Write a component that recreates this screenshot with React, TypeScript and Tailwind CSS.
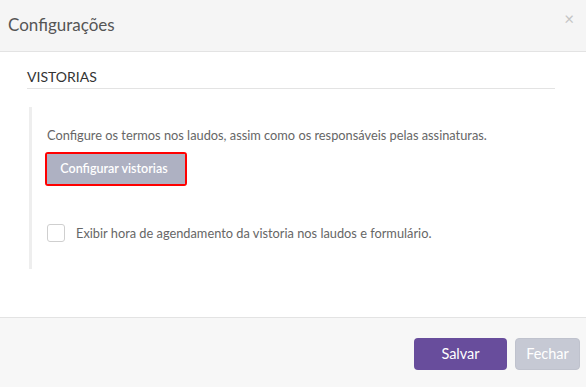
import { useState } from "react";

export default function App() {
    const [showTime, setShowTime] = useState(false);

    return (
        <div className="w-[586px] h-[387px] bg-white flex flex-col font-['Lato','Open_Sans',sans-serif] overflow-hidden">
            {/* Header */}
            <div className="h-[52px] shrink-0 bg-[#f5f5f5] border-b border-[#e3e3e3] flex items-center justify-between pl-[8px] pr-[10px]">
                <h4 className="text-[17px] leading-[22px] text-[#555] pb-[2px]">Configurações</h4>
                <button type="button" className="text-[#c4c4c4] text-[17px] leading-none mb-[14px] mr-[2px]">
                    ×
                </button>
            </div>

            {/* Body */}
            <div className="h-[265px] shrink-0 pt-[16px]">
                <div className="ml-[27px] mr-[31px] border-b border-[#e3e3e3] pb-[2px] text-[14px] leading-[18px] text-[#333] uppercase">
                    Vistorias
                </div>

                <div className="mt-[18px] ml-[29px] h-[162px] border-l-[3px] border-[#eeeeee] pl-[15px] pt-[19px]">
                    <p className="text-[12.8px] leading-[18px] text-[#666]">
                        Configure os termos nos laudos, assim como os responsáveis pelas assinaturas.
                    </p>
                    <div className="mt-[8px] -ml-[2px] inline-flex border-2 border-[#ff0000] rounded-[3px]">
                        <button
                            type="button"
                            className="h-[30px] w-[138px] bg-[#aeb1c2] text-white text-[12.5px] font-semibold flex items-center justify-center pr-[4px]"
                        >
                            Configurar vistorias
                        </button>
                    </div>

                    <label className="mt-[38px] flex items-center gap-[11px] cursor-pointer">
                        <input
                            type="checkbox"
                            checked={showTime}
                            onChange={(e) => setShowTime(e.target.checked)}
                            className="appearance-none w-[18px] h-[18px] rounded-[3px] border border-[#cfcfcf] bg-white checked:bg-[#6a4f9e]"
                        />
                        <span className="text-[12.8px] leading-[18px] text-[#666]">
                            Exibir hora de agendamento da vistoria nos laudos e formulário.
                        </span>
                    </label>
                </div>
            </div>

            {/* Footer */}
            <div className="flex-1 bg-[#f7f7f7] border-t border-[#e3e3e3] flex justify-end items-start gap-[8px] pt-[20px] pr-[6px]">
                <button
                    type="button"
                    className="h-[32px] w-[93px] rounded-[4px] bg-[#684d9c] text-white text-[14.5px] flex items-center justify-center"
                >
                    Salvar
                </button>
                <button
                    type="button"
                    className="h-[32px] w-[65px] rounded-[4px] bg-[#c6c9d4] border border-[#bfc2cd] text-white text-[14.5px] flex items-center justify-center"
                >
                    Fechar
                </button>
            </div>
        </div>
    );
}
